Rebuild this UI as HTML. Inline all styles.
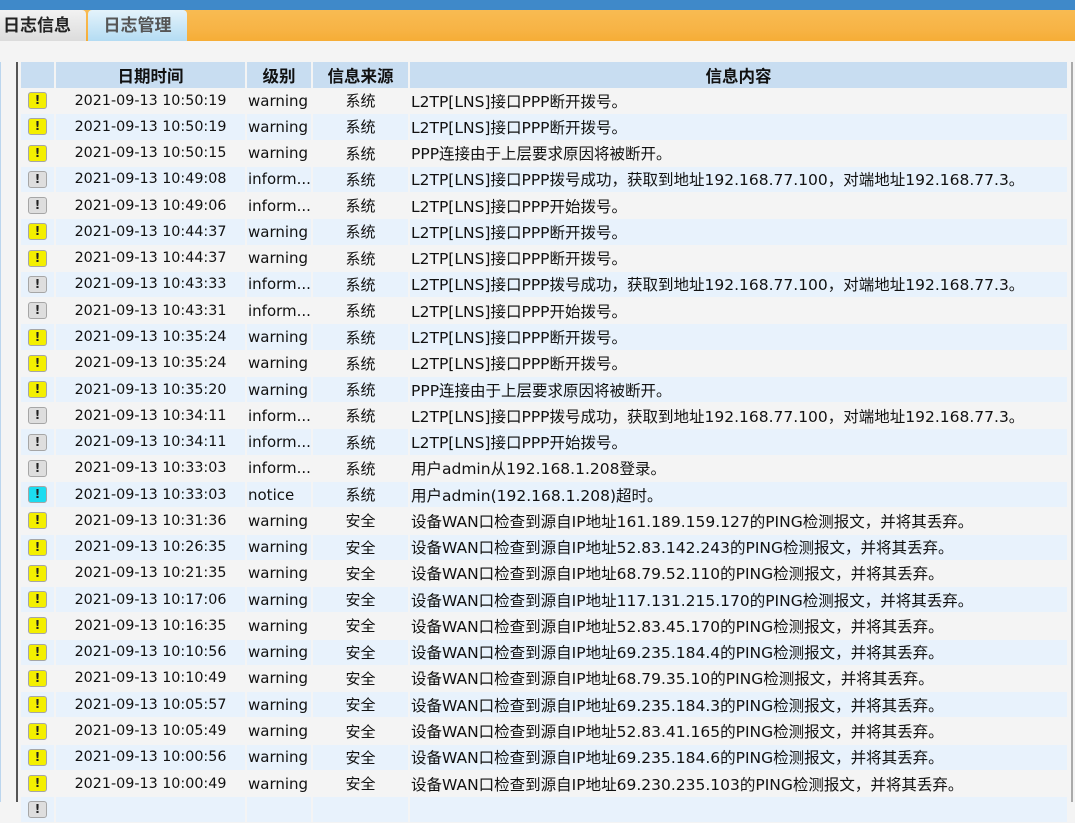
<!DOCTYPE html>
<html><head><meta charset="utf-8">
<style>
*{margin:0;padding:0;box-sizing:border-box}
body{width:1075px;height:802px;overflow:hidden;background:#f4f4f4;font-family:"DejaVu Sans","Liberation Sans","Noto Sans CJK SC",sans-serif;font-size:14.3px;color:#111;position:relative}
.top{position:absolute;left:0;top:0;width:1075px;height:10px;background:#3f89c9}
.tabbar{position:absolute;left:0;top:10px;width:1075px;height:31px;background:linear-gradient(#f8bb52,#f7b446 60%,#f6ad36)}
.tab{position:absolute;top:0;height:31px;font-size:17px;line-height:31px;font-family:"Liberation Sans","Noto Sans CJK SC",sans-serif;font-weight:bold;padding-left:3px}
.t1{left:0;width:86px;background:linear-gradient(#f2f2f2,#dcdcdc);color:#222;border-top-right-radius:4px}
.t2{left:88px;width:99px;background:linear-gradient(#e4f3fb,#b4dcf3);color:#555;text-align:center;padding:0;border-top-left-radius:4px;border-top-right-radius:4px}
.lb{position:absolute;left:0;top:62px;width:1px;height:740px;background:#bcd6ee}
.ld{position:absolute;left:16px;top:62px;width:2px;height:740px;background:#555}
.rd{position:absolute;left:1071px;top:62px;width:2px;height:740px;background:#aaa}
.tbl{position:absolute;left:21px;top:62px}
.r{display:flex;height:26.27px;padding-bottom:1px}
.r>div{margin-right:2px;height:100%;display:flex;align-items:center;white-space:nowrap;overflow:hidden}
.c0{width:33px;justify-content:center}
.c1{width:189px;justify-content:center}
.c2{width:64px;padding-left:1px;font-size:15px}
.c3{width:95px;justify-content:center;font-family:"Noto Sans CJK SC",sans-serif;font-size:15px}
.c4{width:657px;padding-left:1px;font-size:15.5px}
.h{height:26px;padding-bottom:0;margin-bottom:0}
.h>div{background:#c8ddf1;font-weight:bold;justify-content:center;font-size:16.5px;font-family:"Liberation Sans","Noto Sans CJK SC",sans-serif;padding:0}
.e>div{background:#e8f2fc}
.i{width:19px;height:17px;border:1.5px solid #a6a6a6;border-radius:3px;background:#f4ef00;font-weight:bold;font-size:12px;line-height:14px;text-align:center;color:#222}
.g{background:#dedede}
.n{background:#1cdcf0}
</style></head><body>
<div class="top"></div>
<div class="tabbar"><div class="tab t1">日志信息</div><div class="tab t2">日志管理</div></div>
<div class="lb"></div><div class="ld"></div><div class="rd"></div>
<div class="tbl">
<div class="r h"><div class="c0"></div><div class="c1">日期时间</div><div class="c2">级别</div><div class="c3">信息来源</div><div class="c4">信息内容</div></div>
<div class="r"><div class="c0"><div class="i">!</div></div><div class="c1">2021-09-13 10:50:19</div><div class="c2">warning</div><div class="c3">系统</div><div class="c4">L2TP[LNS]接口PPP断开拨号。</div></div>
<div class="r e"><div class="c0"><div class="i">!</div></div><div class="c1">2021-09-13 10:50:19</div><div class="c2">warning</div><div class="c3">系统</div><div class="c4">L2TP[LNS]接口PPP断开拨号。</div></div>
<div class="r"><div class="c0"><div class="i">!</div></div><div class="c1">2021-09-13 10:50:15</div><div class="c2">warning</div><div class="c3">系统</div><div class="c4">PPP连接由于上层要求原因将被断开。</div></div>
<div class="r e"><div class="c0"><div class="i g">!</div></div><div class="c1">2021-09-13 10:49:08</div><div class="c2">inform...</div><div class="c3">系统</div><div class="c4">L2TP[LNS]接口PPP拨号成功，获取到地址192.168.77.100，对端地址192.168.77.3。</div></div>
<div class="r"><div class="c0"><div class="i g">!</div></div><div class="c1">2021-09-13 10:49:06</div><div class="c2">inform...</div><div class="c3">系统</div><div class="c4">L2TP[LNS]接口PPP开始拨号。</div></div>
<div class="r e"><div class="c0"><div class="i">!</div></div><div class="c1">2021-09-13 10:44:37</div><div class="c2">warning</div><div class="c3">系统</div><div class="c4">L2TP[LNS]接口PPP断开拨号。</div></div>
<div class="r"><div class="c0"><div class="i">!</div></div><div class="c1">2021-09-13 10:44:37</div><div class="c2">warning</div><div class="c3">系统</div><div class="c4">L2TP[LNS]接口PPP断开拨号。</div></div>
<div class="r e"><div class="c0"><div class="i g">!</div></div><div class="c1">2021-09-13 10:43:33</div><div class="c2">inform...</div><div class="c3">系统</div><div class="c4">L2TP[LNS]接口PPP拨号成功，获取到地址192.168.77.100，对端地址192.168.77.3。</div></div>
<div class="r"><div class="c0"><div class="i g">!</div></div><div class="c1">2021-09-13 10:43:31</div><div class="c2">inform...</div><div class="c3">系统</div><div class="c4">L2TP[LNS]接口PPP开始拨号。</div></div>
<div class="r e"><div class="c0"><div class="i">!</div></div><div class="c1">2021-09-13 10:35:24</div><div class="c2">warning</div><div class="c3">系统</div><div class="c4">L2TP[LNS]接口PPP断开拨号。</div></div>
<div class="r"><div class="c0"><div class="i">!</div></div><div class="c1">2021-09-13 10:35:24</div><div class="c2">warning</div><div class="c3">系统</div><div class="c4">L2TP[LNS]接口PPP断开拨号。</div></div>
<div class="r e"><div class="c0"><div class="i">!</div></div><div class="c1">2021-09-13 10:35:20</div><div class="c2">warning</div><div class="c3">系统</div><div class="c4">PPP连接由于上层要求原因将被断开。</div></div>
<div class="r"><div class="c0"><div class="i g">!</div></div><div class="c1">2021-09-13 10:34:11</div><div class="c2">inform...</div><div class="c3">系统</div><div class="c4">L2TP[LNS]接口PPP拨号成功，获取到地址192.168.77.100，对端地址192.168.77.3。</div></div>
<div class="r e"><div class="c0"><div class="i g">!</div></div><div class="c1">2021-09-13 10:34:11</div><div class="c2">inform...</div><div class="c3">系统</div><div class="c4">L2TP[LNS]接口PPP开始拨号。</div></div>
<div class="r"><div class="c0"><div class="i g">!</div></div><div class="c1">2021-09-13 10:33:03</div><div class="c2">inform...</div><div class="c3">系统</div><div class="c4">用户admin从192.168.1.208登录。</div></div>
<div class="r e"><div class="c0"><div class="i n">!</div></div><div class="c1">2021-09-13 10:33:03</div><div class="c2">notice</div><div class="c3">系统</div><div class="c4">用户admin(192.168.1.208)超时。</div></div>
<div class="r"><div class="c0"><div class="i">!</div></div><div class="c1">2021-09-13 10:31:36</div><div class="c2">warning</div><div class="c3">安全</div><div class="c4">设备WAN口检查到源自IP地址161.189.159.127的PING检测报文，并将其丢弃。</div></div>
<div class="r e"><div class="c0"><div class="i">!</div></div><div class="c1">2021-09-13 10:26:35</div><div class="c2">warning</div><div class="c3">安全</div><div class="c4">设备WAN口检查到源自IP地址52.83.142.243的PING检测报文，并将其丢弃。</div></div>
<div class="r"><div class="c0"><div class="i">!</div></div><div class="c1">2021-09-13 10:21:35</div><div class="c2">warning</div><div class="c3">安全</div><div class="c4">设备WAN口检查到源自IP地址68.79.52.110的PING检测报文，并将其丢弃。</div></div>
<div class="r e"><div class="c0"><div class="i">!</div></div><div class="c1">2021-09-13 10:17:06</div><div class="c2">warning</div><div class="c3">安全</div><div class="c4">设备WAN口检查到源自IP地址117.131.215.170的PING检测报文，并将其丢弃。</div></div>
<div class="r"><div class="c0"><div class="i">!</div></div><div class="c1">2021-09-13 10:16:35</div><div class="c2">warning</div><div class="c3">安全</div><div class="c4">设备WAN口检查到源自IP地址52.83.45.170的PING检测报文，并将其丢弃。</div></div>
<div class="r e"><div class="c0"><div class="i">!</div></div><div class="c1">2021-09-13 10:10:56</div><div class="c2">warning</div><div class="c3">安全</div><div class="c4">设备WAN口检查到源自IP地址69.235.184.4的PING检测报文，并将其丢弃。</div></div>
<div class="r"><div class="c0"><div class="i">!</div></div><div class="c1">2021-09-13 10:10:49</div><div class="c2">warning</div><div class="c3">安全</div><div class="c4">设备WAN口检查到源自IP地址68.79.35.10的PING检测报文，并将其丢弃。</div></div>
<div class="r e"><div class="c0"><div class="i">!</div></div><div class="c1">2021-09-13 10:05:57</div><div class="c2">warning</div><div class="c3">安全</div><div class="c4">设备WAN口检查到源自IP地址69.235.184.3的PING检测报文，并将其丢弃。</div></div>
<div class="r"><div class="c0"><div class="i">!</div></div><div class="c1">2021-09-13 10:05:49</div><div class="c2">warning</div><div class="c3">安全</div><div class="c4">设备WAN口检查到源自IP地址52.83.41.165的PING检测报文，并将其丢弃。</div></div>
<div class="r e"><div class="c0"><div class="i">!</div></div><div class="c1">2021-09-13 10:00:56</div><div class="c2">warning</div><div class="c3">安全</div><div class="c4">设备WAN口检查到源自IP地址69.235.184.6的PING检测报文，并将其丢弃。</div></div>
<div class="r"><div class="c0"><div class="i">!</div></div><div class="c1">2021-09-13 10:00:49</div><div class="c2">warning</div><div class="c3">安全</div><div class="c4">设备WAN口检查到源自IP地址69.230.235.103的PING检测报文，并将其丢弃。</div></div>
<div class="r e"><div class="c0"><div class="i g">!</div></div><div class="c1"></div><div class="c2"></div><div class="c3"></div><div class="c4"></div></div>
</div>
</body></html>
